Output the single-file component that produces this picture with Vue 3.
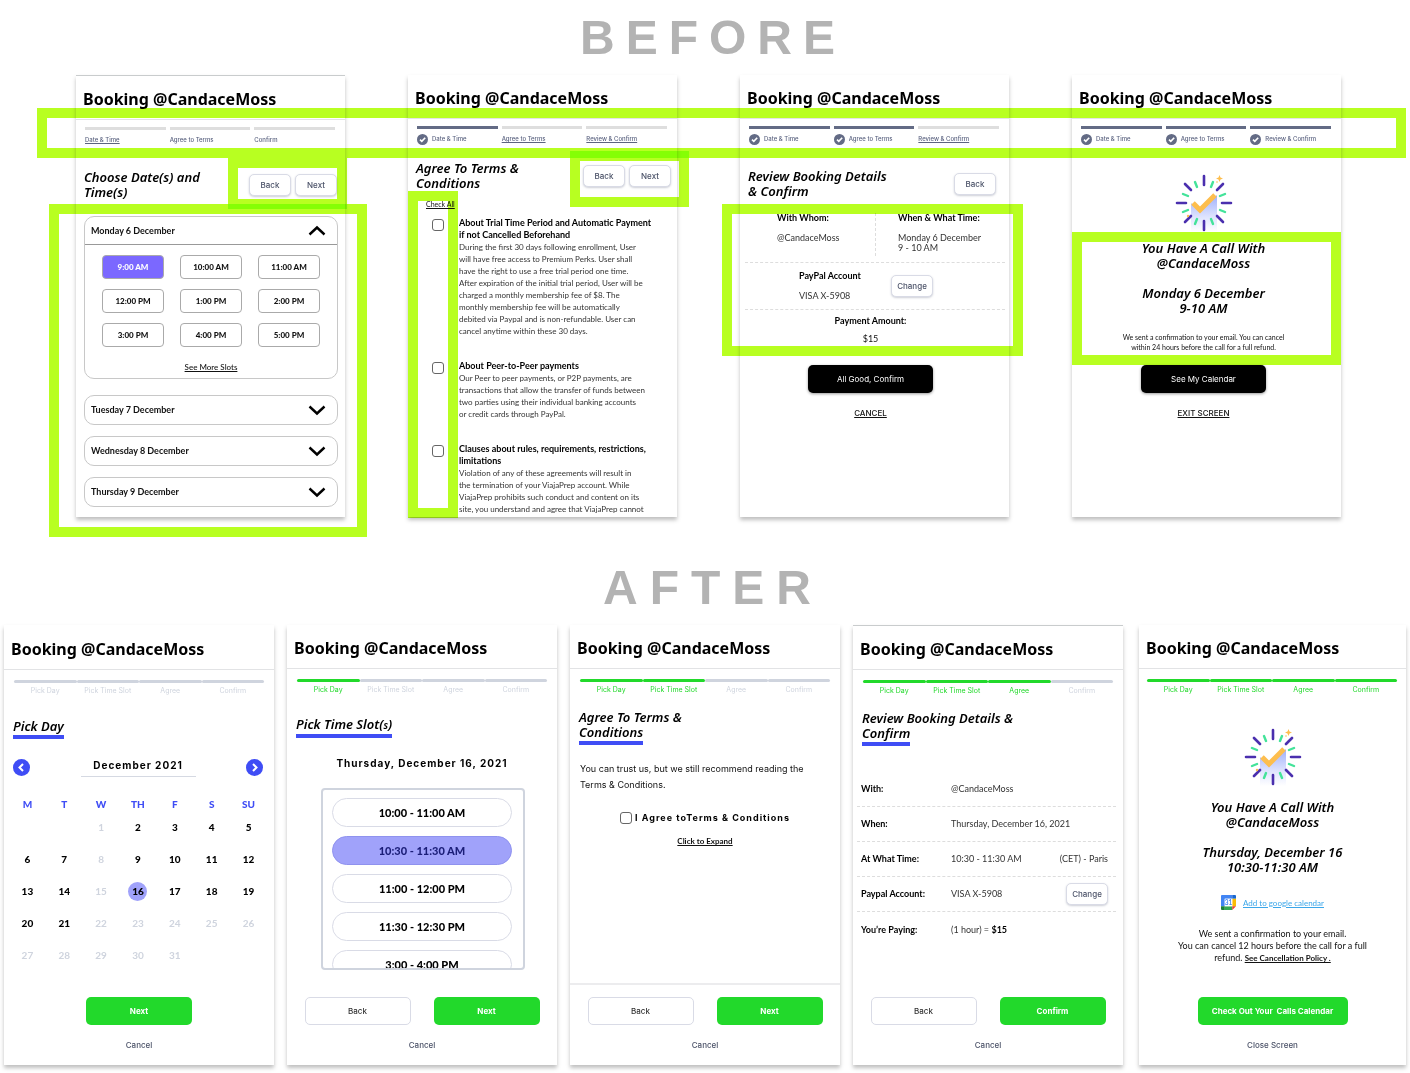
<script setup>
const beforeSteps = ['Date & Time', 'Agree to Terms', 'Review & Confirm']
const afterSteps = ['Pick Day', 'Pick Time Slot', 'Agree', 'Confirm']

const slots = [
  '9:00 AM', '10:00 AM', '11:00 AM',
  '12:00 PM', '1:00 PM', '2:00 PM',
  '3:00 PM', '4:00 PM', '5:00 PM',
]
const otherDays = ['Tuesday 7 December', 'Wednesday 8 December', 'Thursday 9 December']

const terms = [
  {
    title: 'About Trial Time Period and Automatic Payment\nif not Cancelled Beforehand',
    text: 'During the first 30 days following enrollment, User\nwill have free access to Premium Perks. User shall\nhave the right to use a free trial period one time.\nAfter expiration of the initial trial period, User will be\ncharged a monthly membership fee of $8. The\nmonthly membership fee will be automatically\ndebited via Paypal and is non-refundable. User can\ncancel anytime within these 30 days.',
  },
  {
    title: 'About Peer-to-Peer payments',
    text: 'Our Peer to peer payments, or P2P payments, are\ntransactions that allow the transfer of funds between\ntwo parties using their individual banking accounts\nor credit cards through PayPal.',
  },
  {
    title: 'Clauses about rules, requirements, restrictions,\nlimitations',
    text: 'Violation of any of these agreements will result in\nthe termination of your ViajaPrep account. While\nViajaPrep prohibits such conduct and content on its\nsite, you understand and agree that ViajaPrep cannot',
  },
]

const weekdays = ['M', 'T', 'W', 'TH', 'F', 'S', 'SU']
const weeks = [
  [null, null, 1, 2, 3, 4, 5],
  [6, 7, 8, 9, 10, 11, 12],
  [13, 14, 15, 16, 17, 18, 19],
  [20, 21, 22, 23, 24, 25, 26],
  [27, 28, 29, 30, 31, null, null],
]
const isOff = (day) => [1, 8, 15].includes(day) || day > 21

const times = ['10:00 - 11:00 AM', '10:30 - 11:30 AM', '11:00 - 12:00 PM', '11:30 - 12:30 PM', '3:00 - 4:00 PM']
</script>

<template>
  <main class="board">
    <svg class="defs" aria-hidden="true">
      <linearGradient id="fade" x1="0" y1="0" x2="0" y2="1">
        <stop offset="0" stop-color="#9fb0fb" />
        <stop offset="0.6" stop-color="#dfe4fe" />
        <stop offset="1" stop-color="#ffffff" />
      </linearGradient>
      <symbol id="burst" viewBox="-29 -29 58 58">
        <path d="M-13 0 L-4 8 L13 -8 V29 H-13 Z" fill="url(#fade)" />
        <g stroke="#4a2fae" stroke-width="2.600" stroke-linecap="round">
          <path d="M0 -27V-18M0 18V27M-27 0H-18M18 0H27M-19 -19L-13 -13M19 -19L13 -13M-19 19L-13 13M19 19L13 13" />
        </g>
        <path
          d="M-9 -21L-7 -16M9 -21L7 -16M-9 21L-7 16M9 21L7 16M-21 -9L-16 -7M21 -9L16 -7M-21 9L-16 7M21 9L16 7"
          stroke="#43e39a" stroke-width="2.400" stroke-linecap="round" />
        <path d="M-11 0L-4 7L11 -8" fill="none" stroke="#fdbe4e" stroke-width="5" />
        <path d="M15.500 -28L16.500 -25.500L19 -24.500L16.500 -23.500L15.500 -21L14.500 -23.500L12 -24.500L14.500 -25.500Z" fill="#fdbe4e" />
        <circle cx="-16" cy="13" r="1.200" fill="#fdbe4e" />
        <circle cx="13" cy="-21" r="0.800" fill="#fdbe4e" />
      </symbol>
      <symbol id="tick" viewBox="0 0 11 11">
        <circle cx="5.500" cy="5.500" r="5.500" fill="#636b85" />
        <path d="M3 5.700L4.800 7.400L8.200 3.800" fill="none" stroke="#fff" stroke-width="1.600" />
      </symbol>
      <symbol id="chevron" viewBox="0 0 18 11">
        <path d="M1.500 1.500L9 8.500L16.500 1.500" fill="none" stroke="#000" stroke-width="2.400" />
      </symbol>
    </svg>

    <h1>BEFORE</h1>
    <section class="row before">
      <article class="card topline">
        <header><h2>Booking @CandaceMoss</h2></header>
        <ol class="steps">
          <li><a href="#">Date &amp; Time</a></li>
          <li><span>Agree to Terms</span></li>
          <li><span>Confirm</span></li>
        </ol>
        <div class="heading low">
          <h3>Choose Date(s) and<br>Time(s)</h3>
          <div class="pair"><button class="small">Back</button><button class="small">Next</button></div>
        </div>
        <div class="accordion open">
          <button class="fold">Monday 6 December<svg class="flip"><use href="#chevron" /></svg></button>
          <div class="slots">
            <button v-for="(slot, i) in slots" :key="slot" :class="{ on: i === 0 }">{{ slot }}</button>
          </div>
          <a href="#" class="more">See More Slots</a>
        </div>
        <div v-for="day in otherDays" :key="day" class="accordion">
          <button class="fold">{{ day }}<svg><use href="#chevron" /></svg></button>
        </div>
        <i class="mark mark-nav"></i>
        <i class="mark mark-days"></i>
      </article>

      <article class="card">
        <header><h2>Booking @CandaceMoss</h2></header>
        <ol class="steps">
          <li v-for="(step, i) in beforeSteps" :key="step" :class="{ done: i < 1 }">
            <template v-if="i < 1"><svg><use href="#tick" /></svg><span>{{ step }}</span></template>
            <a v-else href="#">{{ step }}</a>
          </li>
        </ol>
        <div class="heading">
          <h3>Agree To Terms &amp;<br>Conditions</h3>
          <div class="pair"><button class="small">Back</button><button class="small">Next</button></div>
        </div>
        <a href="#" class="check-all">Check All</a>
        <div class="terms">
          <label v-for="term in terms" :key="term.title">
            <input type="checkbox">
            <span><b>{{ term.title }}</b>{{ term.text }}</span>
          </label>
        </div>
        <i class="mark mark-nav high"></i>
        <i class="mark mark-checks"></i>
      </article>

      <article class="card">
        <header><h2>Booking @CandaceMoss</h2></header>
        <ol class="steps">
          <li v-for="(step, i) in beforeSteps" :key="step" :class="{ done: i < 2 }">
            <template v-if="i < 2"><svg><use href="#tick" /></svg><span>{{ step }}</span></template>
            <a v-else href="#">{{ step }}</a>
          </li>
        </ol>
        <div class="heading low review">
          <h3>Review Booking Details<br>&amp; Confirm</h3>
          <button class="small">Back</button>
        </div>
        <div class="facts">
          <div class="who"><b>With Whom:</b><p>@CandaceMoss</p></div>
          <div class="when"><b>When &amp; What Time:</b><p>Monday 6 December<br>9 - 10 AM</p></div>
        </div>
        <div class="facts account">
          <div><b>PayPal Account</b><p>VISA X-5908</p></div>
          <button class="small">Change</button>
        </div>
        <div class="amount"><b>Payment Amount:</b><p>$15</p></div>
        <div class="final">
          <button class="black">All Good, Confirm</button>
          <a href="#">CANCEL</a>
        </div>
        <i class="mark mark-facts"></i>
      </article>

      <article class="card">
        <header><h2>Booking @CandaceMoss</h2></header>
        <ol class="steps">
          <li v-for="step in beforeSteps" :key="step" class="done">
            <svg><use href="#tick" /></svg><span>{{ step }}</span>
          </li>
        </ol>
        <div class="success">
          <svg class="burst"><use href="#burst" /></svg>
          <h3>You Have A Call With<br>@CandaceMoss</h3>
          <h3>Monday 6 December<br>9-10 AM</h3>
          <p>We sent a confirmation to your email. You can cancel<br>within 24 hours before the call for a full refund.</p>
        </div>
        <div class="final">
          <button class="black">See My Calendar</button>
          <a href="#">EXIT SCREEN</a>
        </div>
        <i class="mark mark-success"></i>
      </article>
      <i class="mark mark-steps"></i>
    </section>

    <h1 class="second">AFTER</h1>
    <section class="row after">
      <article class="card shifted">
        <header><h2>Booking @CandaceMoss</h2></header>
        <ol class="progress"><li v-for="step in afterSteps" :key="step">{{ step }}</li></ol>
        <div class="title"><h3><span>Pick Day</span></h3></div>
        <div class="month">
          <button aria-label="Previous month"><svg viewBox="0 0 17 17"><path d="M10 5L6.500 8.500L10 12" /></svg></button>
          <strong>December 2021</strong>
          <button aria-label="Next month"><svg viewBox="0 0 17 17"><path d="M7 5L10.500 8.500L7 12" /></svg></button>
        </div>
        <table>
          <thead><tr><th v-for="day in weekdays" :key="day">{{ day }}</th></tr></thead>
          <tbody>
            <tr v-for="(week, w) in weeks" :key="w">
              <td v-for="(day, d) in week" :key="d">
                <button v-if="day" :class="{ off: isOff(day), on: day === 16 }" :disabled="isOff(day)">{{ day }}</button>
              </td>
            </tr>
          </tbody>
        </table>
        <footer>
          <div class="actions"><button class="green">Next</button></div>
          <button class="quiet">Cancel</button>
        </footer>
      </article>

      <article class="card">
        <header><h2>Booking @CandaceMoss</h2></header>
        <ol class="progress"><li v-for="(step, i) in afterSteps" :key="step" :class="{ done: i < 1 }">{{ step }}</li></ol>
        <div class="title"><h3><span>Pick Time Slot(<small>s</small>)</span></h3></div>
        <strong class="date">Thursday, December 16, 2021</strong>
        <div class="times">
          <button v-for="(time, i) in times" :key="time" :class="{ on: i === 1 }">{{ time }}</button>
        </div>
        <footer>
          <div class="actions"><button class="outline">Back</button><button class="green">Next</button></div>
          <button class="quiet">Cancel</button>
        </footer>
      </article>

      <article class="card">
        <header><h2>Booking @CandaceMoss</h2></header>
        <ol class="progress"><li v-for="(step, i) in afterSteps" :key="step" :class="{ done: i < 2 }">{{ step }}</li></ol>
        <div class="title"><h3>Agree To Terms &amp;<br><span>Conditions</span></h3></div>
        <p class="trust">You can trust us, but we still recommend reading the<br>Terms &amp; Conditions.</p>
        <label class="agree"><input type="checkbox">I Agree toTerms &amp; Conditions</label>
        <a href="#" class="expand">Click to Expand</a>
        <footer class="raised">
          <div class="actions"><button class="outline">Back</button><button class="green">Next</button></div>
          <button class="quiet">Cancel</button>
        </footer>
      </article>

      <article class="card topline">
        <header><h2>Booking @CandaceMoss</h2></header>
        <ol class="progress"><li v-for="(step, i) in afterSteps" :key="step" :class="{ done: i < 3 }">{{ step }}</li></ol>
        <div class="title"><h3>Review Booking Details &amp;<br><span>Confirm</span></h3></div>
        <dl>
          <div><dt>With:</dt><dd>@CandaceMoss</dd></div>
          <div><dt>When:</dt><dd>Thursday, December 16, 2021</dd></div>
          <div><dt>At What Time:</dt><dd>10:30 - 11:30 AM<span>(CET) - Paris</span></dd></div>
          <div><dt>Paypal Account:</dt><dd>VISA X-5908<button class="small">Change</button></dd></div>
          <div><dt>You’re Paying:</dt><dd><span>(1 hour) = <b>$15</b></span></dd></div>
        </dl>
        <footer>
          <div class="actions"><button class="outline">Back</button><button class="green">Confirm</button></div>
          <button class="quiet">Cancel</button>
        </footer>
      </article>

      <article class="card narrow">
        <header><h2>Booking @CandaceMoss</h2></header>
        <ol class="progress"><li v-for="step in afterSteps" :key="step" class="done">{{ step }}</li></ol>
        <div class="success roomy">
          <svg class="burst"><use href="#burst" /></svg>
          <h3>You Have A Call With<br>@CandaceMoss</h3>
          <h3>Thursday, December 16<br>10:30-11:30 AM</h3>
          <a href="#" class="gcal">
            <svg viewBox="0 0 16 16">
              <path d="M1 0H12V4H4V12H0V1Q0 0 1 0Z" fill="#4285f4" />
              <path d="M12 0H15Q16 0 16 1V4H12Z" fill="#1967d2" />
              <path d="M12 4H16V12H12Z" fill="#fbbc04" />
              <path d="M4 12H12V16H4Z" fill="#34a853" />
              <path d="M0 12H4V16H1Q0 16 0 15Z" fill="#188038" />
              <path d="M12 12H16L12 16Z" fill="#ea4335" />
              <rect x="4" y="4" width="8" height="8" fill="#fff" />
              <text x="8" y="10.500" text-anchor="middle" font-size="7" font-weight="700" fill="#4285f4">31</text>
            </svg>
            <span>Add to google calendar</span>
          </a>
          <p>We sent a confirmation to your email.<br>You can cancel 12 hours before the call for a full<br>refund. <a href="#">See Cancellation Policy .</a></p>
        </div>
        <footer>
          <div class="actions"><button class="green wide">Check Out Your&nbsp; Calls Calendar</button></div>
          <button class="quiet">Close Screen</button>
        </footer>
      </article>
    </section>
  </main>
</template>

<style>
body { margin: 0; background: #fff; }
</style>

<style scoped>
* { box-sizing: border-box; }
.board { padding-bottom: 8px; font: 8px/12px Lato, "Noto Sans", sans-serif; color: #111; }
.defs { position: absolute; width: 0; height: 0; }
h1, h2, h3, p, ol, dl, dd { margin: 0; padding: 0; }
ol { list-style: none; }
button { padding: 0; border: 0; background: none; color: inherit; font: inherit; cursor: pointer; }
a { color: inherit; }

h1 {
  padding-left: 16px;
  font: 700 48px/75px "Liberation Sans", Arial, sans-serif;
  letter-spacing: 11px;
  text-align: center;
  color: #b3b3b3;
}
h1.second { margin-top: 33px; letter-spacing: 12px; }
.row { display: grid; position: relative; }
.before { grid-template-columns: repeat(4, 1fr); gap: 63px; padding: 0 69px 0 76px; }
.after { grid-template-columns: repeat(5, 1fr); gap: 13px; padding: 0 4px; }

.card {
  position: relative;
  display: flex;
  flex-direction: column;
  min-height: 440px;
  box-shadow: 0 3px 4px rgba(0, 0, 0, 0.25);
}
.before .card { min-height: 442px; }
.topline { border-top: 1px solid #c9cccd; }
.shifted { border-top: 1px solid transparent; }
.narrow { margin-left: 3px; }
header { display: flex; align-items: center; height: 44px; padding: 3px 7px 0; border-bottom: 1px solid #e2e3e5; }
h2 { font: 700 16px/20px "Noto Sans", sans-serif; color: #000; white-space: nowrap; }
h3 { font: italic 600 13px/15px "Noto Sans", sans-serif; color: #000; white-space: nowrap; }

/* three-step tracker */
.steps { display: grid; grid-template-columns: repeat(3, 1fr); gap: 4px; padding: 7px 10px 0 9px; }
.steps li {
  display: flex;
  align-items: center;
  gap: 4px;
  height: 20px;
  padding-top: 3px;
  border-top: 3px solid #dedede;
  font: 500 6px/8px Inter, sans-serif;
  color: #5b6380;
  white-space: nowrap;
}
.steps li.done { border-color: #636b85; }
.steps svg { width: 11px; height: 11px; }
.steps a { text-underline-offset: 1px; }

.heading { display: flex; justify-content: space-between; align-items: center; margin-top: 15px; padding: 0 6px 0 8px; }
.heading.low { margin-top: 23px; padding-right: 8px; }
.heading.review { padding-right: 13px; }
.pair { display: flex; gap: 4px; }
.small {
  width: 42px;
  height: 22px;
  border: 1px solid #d9dbe6;
  border-radius: 5px;
  background: #fff;
  box-shadow: 0 1px 2px rgba(60, 66, 100, 0.25);
  font: 500 8px/10px Inter, sans-serif;
  color: #4b5268;
}

.accordion { margin: 11px 7px 0 8px; border: 1px solid #c8c8c8; border-radius: 10px; }
.accordion.open { margin: 16px 7px 5px 8px; }
.fold {
  display: flex;
  justify-content: space-between;
  align-items: center;
  width: 100%;
  height: 28px;
  padding: 0 11px 0 6px;
  font-weight: 700;
  font-size: 9px;
}
.fold svg { width: 18px; height: 11px; }
.fold .flip { transform: rotate(180deg); }
.open .fold { border-bottom: 1px solid #999; }
.slots { display: grid; grid-template-columns: repeat(3, 62px); gap: 10px 16px; padding: 10px 0 14px 17px; }
.slots button { height: 24px; border: 1px solid #aaa; border-radius: 4px; font-weight: 900; font-size: 8px; }
.slots .on { background: #7b68ff; color: #fff; }
.more { display: block; margin-bottom: 5px; text-align: center; font-weight: 500; }

.check-all { margin: 6px 0 0 18px; font-size: 7px; line-height: 14px; }
.terms { padding: 6px 0 0 24px; }
.terms label { display: flex; gap: 15px; margin-bottom: 23px; font-size: 8px; white-space: pre; color: #333; }
.terms label:last-child { margin-bottom: 0; }
.terms b { display: block; font-size: 9px; color: #000; }
input { appearance: none; flex: none; width: 12px; height: 12px; margin: 2px 0 0; border: 1px solid #666; border-radius: 3px; background: #fff; }

.facts { display: grid; grid-template-columns: 131px 1fr; margin: 14px 4px 0 5px; border-bottom: 1px dashed #ddd; font-size: 9px; line-height: 10px; }
.facts b, .amount b { color: #000; }
.facts p { margin-top: 10px; color: #333; }
.who { padding-left: 32px; }
.who, .when { height: 49px; }
.who { border-right: 1px dashed #ddd; height: 43px; }
.when { padding-left: 22px; }
.facts.account { grid-template-columns: 146px 1fr; align-items: center; height: 47px; margin-top: 0; }
.account div { padding-left: 54px; }
.amount { padding: 6px 8px 0 0; text-align: center; line-height: 10px; font-size: 9px; }
.amount p { margin-top: 8px; }
.final { display: flex; flex-direction: column; align-items: center; gap: 14px; padding: 21px 8px 0 0; font: 8px/12px Inter, sans-serif; }
.final a { text-underline-offset: 1px; font-weight: 500; }
.black { width: 125px; height: 28px; border-radius: 5px; background: #000; color: #fff; box-shadow: 0 1px 3px rgba(0, 0, 0, 0.4); }

.success { display: flex; flex-direction: column; align-items: center; padding: 28px 6px 0 0; text-align: center; }
.burst { width: 58px; height: 58px; }
.success h3 { margin-top: 15px; }
.success .burst + h3 { margin-top: 9px; }
.success p { margin-top: 16px; font-size: 7px; line-height: 10px; }
.success + .final { padding: 13px 6px 0 0; }
.success.roomy { padding: 34px 0 0; }
.roomy .burst + h3 { margin-top: 14px; }
.success.roomy p { margin-top: 18px; font-size: 9px; line-height: 12px; }
.roomy p a { font-weight: 700; font-size: 8px; }
.gcal { display: flex; align-items: center; gap: 7px; margin-top: 20px; font-size: 8px; color: #3ba7ea; }
.gcal svg { width: 15px; height: 15px; }

/* highlighter frames */
.mark { position: absolute; border: 10px solid #b8ff21; mix-blend-mode: multiply; pointer-events: none; }
.mark-steps { left: 37px; right: 4px; top: 33px; height: 50px; }
.mark-nav { right: -2px; top: 82px; width: 119px; height: 51px; }
.mark-nav.high { right: -12px; top: 76px; height: 56px; }
.mark-days { left: -27px; right: -22px; top: 128px; bottom: -20px; }
.mark-checks { left: 0; top: 116px; width: 50px; bottom: -1px; }
.mark-facts { left: -18px; right: -14px; top: 129px; height: 152px; }
.mark-success { left: 0; right: 0; top: 157px; height: 133px; }

/* four-step tracker */
.progress { display: grid; grid-template-columns: repeat(4, 1fr); padding: 10px 10px 0; }
.narrow .progress { padding: 10px 9px 0 8px; }
.progress li { position: relative; padding-top: 7px; font: 400 7px/8px Inter, sans-serif; text-align: center; color: #cfd4de; }
.progress li::before { content: ""; display: block; height: 3px; margin: -7px 0 4px; border-radius: 2px; background: #cfd4de; }
.progress .done { color: #22d92b; }
.progress .done::before { background: #22d92b; }

.title { display: flex; align-items: center; height: 35px; margin-top: 16px; padding-left: 9px; }
.title span { display: inline-block; padding-bottom: 1px; border-bottom: 4px solid #3f4df5; }
.title small { font-size: 10px; }

.month { display: flex; justify-content: space-between; align-items: center; margin: 11px 11px 0 9px; height: 20px; }
.month strong, .date { font: 700 10px/16px Inter, sans-serif; letter-spacing: 1px; color: #000; }
.month strong { width: 115px; height: 20px; border-bottom: 1px solid #d5d9e2; text-align: center; }
.month button { width: 17px; height: 17px; border-radius: 50%; background: #3f4df5; }
.month svg { display: block; fill: none; stroke: #fff; stroke-width: 2; }
table { margin: 20px 7px 0 5px; border-collapse: collapse; table-layout: fixed; font-size: 10px; font-weight: 700; text-align: center; }
th { height: 14px; padding: 0; color: #3f4df5; line-height: 14px; font-weight: 900; }
td { height: 32px; padding: 0; color: #000; }
td button { width: 19px; height: 19px; border-radius: 50%; font-weight: 900; }
td .off { color: #cfd4de; font-weight: 700; }
td .on { background: #a0a2fa; }

.date { margin-top: 10px; text-align: center; }
.times { display: flex; flex-direction: column; gap: 9px; height: 182px; margin: 17px 32px 0 34px; padding: 8px 11px 0 9px; border: 2px solid #cfd4de; border-radius: 4px; overflow: hidden; }
.times button { flex: none; height: 29px; border: 1px solid #d9dbe6; border-radius: 15px; font-weight: 900; font-size: 11px; color: #000; }
.times .on { border-color: #8f92ee; background: #a0a2fa; color: #1b1e78; }

.trust { margin: 16px 0 0 10px; font: 400 9px/16px Inter, sans-serif; white-space: nowrap; }
.agree { display: flex; justify-content: center; gap: 3px; margin-top: 17px; font: 700 9px/16px Inter, sans-serif; letter-spacing: 1px; color: #000; }
.expand { margin-top: 9px; text-align: center; font-size: 8px; font-weight: 700; line-height: 12px; }

dl { margin: 26px 7px 0 4px; font-size: 9px; }
dl div { display: grid; grid-template-columns: 90px 1fr; align-items: center; height: 35px; padding: 0 8px 0 4px; border-bottom: 1px dashed #ddd; }
dl div:last-child { border: 0; }
dt { font-weight: 700; color: #000; }
dd { display: flex; justify-content: space-between; align-items: center; color: #333; }
dd b { color: #000; }

footer { display: flex; flex-direction: column; align-items: center; gap: 14px; margin-top: auto; padding: 12px 0 14px; font: 500 8px/12px Inter, sans-serif; color: #4b5268; }
footer.raised { border-top: 2px solid #ececee; }
.actions { display: flex; gap: 23px; }
.actions button { width: 106px; height: 28px; border-radius: 5px; }
.green { background: #22d92b; color: #fff; font-weight: 700; }
.outline { border: 1px solid #d9dbe6; color: #333; }
.actions .wide { width: 150px; }
</style>
